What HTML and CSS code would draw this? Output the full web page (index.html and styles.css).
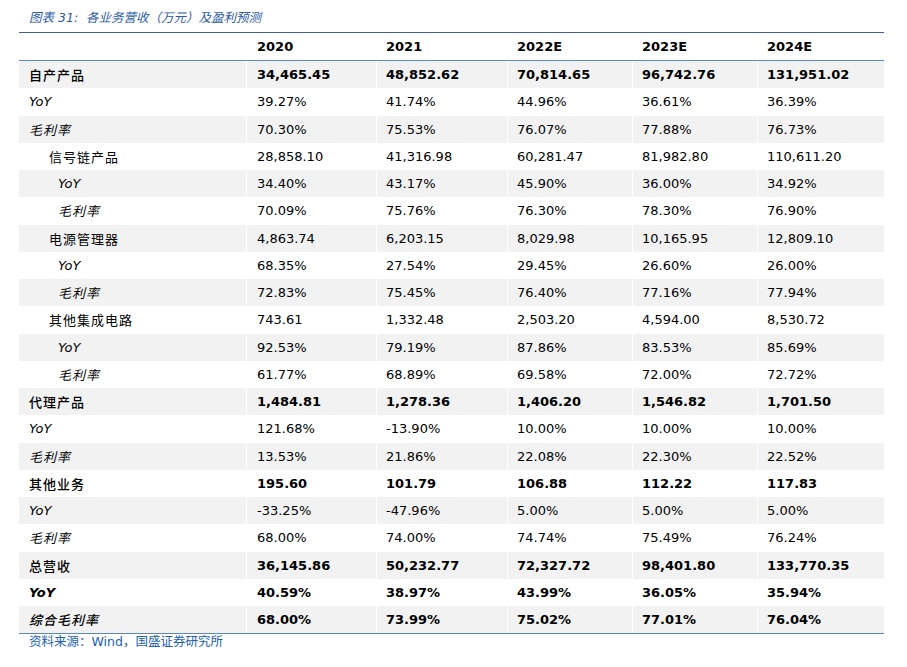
FILE: index.html
```html
<!DOCTYPE html>
<html lang="zh">
<head>
<meta charset="utf-8">
<title>各业务营收及盈利预测</title>
<link rel="stylesheet" href="styles.css">
</head>
<body>
<div class="page">
  <div class="title">图表 31:&nbsp; 各业务营收（万元）及盈利预测</div>
  <div class="table">
    <div class="row head">
      <div class="cell label"></div>
      <div class="cell">2020</div>
      <div class="cell">2021</div>
      <div class="cell">2022E</div>
      <div class="cell">2023E</div>
      <div class="cell">2024E</div>
    </div>
    <div class="row gray strong">
      <div class="cell label cjk">自产产品</div>
      <div class="cell">34,465.45</div><div class="cell">48,852.62</div><div class="cell">70,814.65</div><div class="cell">96,742.76</div><div class="cell">131,951.02</div>
    </div>
    <div class="row">
      <div class="cell label yoy">YoY</div>
      <div class="cell">39.27%</div><div class="cell">41.74%</div><div class="cell">44.96%</div><div class="cell">36.61%</div><div class="cell">36.39%</div>
    </div>
    <div class="row gray">
      <div class="cell label cjk it">毛利率</div>
      <div class="cell">70.30%</div><div class="cell">75.53%</div><div class="cell">76.07%</div><div class="cell">77.88%</div><div class="cell">76.73%</div>
    </div>
    <div class="row">
      <div class="cell label cjk l2">信号链产品</div>
      <div class="cell">28,858.10</div><div class="cell">41,316.98</div><div class="cell">60,281.47</div><div class="cell">81,982.80</div><div class="cell">110,611.20</div>
    </div>
    <div class="row gray">
      <div class="cell label yoy l3">YoY</div>
      <div class="cell">34.40%</div><div class="cell">43.17%</div><div class="cell">45.90%</div><div class="cell">36.00%</div><div class="cell">34.92%</div>
    </div>
    <div class="row">
      <div class="cell label cjk it l3">毛利率</div>
      <div class="cell">70.09%</div><div class="cell">75.76%</div><div class="cell">76.30%</div><div class="cell">78.30%</div><div class="cell">76.90%</div>
    </div>
    <div class="row gray">
      <div class="cell label cjk l2">电源管理器</div>
      <div class="cell">4,863.74</div><div class="cell">6,203.15</div><div class="cell">8,029.98</div><div class="cell">10,165.95</div><div class="cell">12,809.10</div>
    </div>
    <div class="row">
      <div class="cell label yoy l3">YoY</div>
      <div class="cell">68.35%</div><div class="cell">27.54%</div><div class="cell">29.45%</div><div class="cell">26.60%</div><div class="cell">26.00%</div>
    </div>
    <div class="row gray">
      <div class="cell label cjk it l3">毛利率</div>
      <div class="cell">72.83%</div><div class="cell">75.45%</div><div class="cell">76.40%</div><div class="cell">77.16%</div><div class="cell">77.94%</div>
    </div>
    <div class="row">
      <div class="cell label cjk l2">其他集成电路</div>
      <div class="cell">743.61</div><div class="cell">1,332.48</div><div class="cell">2,503.20</div><div class="cell">4,594.00</div><div class="cell">8,530.72</div>
    </div>
    <div class="row gray">
      <div class="cell label yoy l3">YoY</div>
      <div class="cell">92.53%</div><div class="cell">79.19%</div><div class="cell">87.86%</div><div class="cell">83.53%</div><div class="cell">85.69%</div>
    </div>
    <div class="row">
      <div class="cell label cjk it l3">毛利率</div>
      <div class="cell">61.77%</div><div class="cell">68.89%</div><div class="cell">69.58%</div><div class="cell">72.00%</div><div class="cell">72.72%</div>
    </div>
    <div class="row gray strong">
      <div class="cell label cjk">代理产品</div>
      <div class="cell">1,484.81</div><div class="cell">1,278.36</div><div class="cell">1,406.20</div><div class="cell">1,546.82</div><div class="cell">1,701.50</div>
    </div>
    <div class="row">
      <div class="cell label yoy">YoY</div>
      <div class="cell">121.68%</div><div class="cell">-13.90%</div><div class="cell">10.00%</div><div class="cell">10.00%</div><div class="cell">10.00%</div>
    </div>
    <div class="row gray">
      <div class="cell label cjk it">毛利率</div>
      <div class="cell">13.53%</div><div class="cell">21.86%</div><div class="cell">22.08%</div><div class="cell">22.30%</div><div class="cell">22.52%</div>
    </div>
    <div class="row strong">
      <div class="cell label cjk">其他业务</div>
      <div class="cell">195.60</div><div class="cell">101.79</div><div class="cell">106.88</div><div class="cell">112.22</div><div class="cell">117.83</div>
    </div>
    <div class="row gray">
      <div class="cell label yoy">YoY</div>
      <div class="cell">-33.25%</div><div class="cell">-47.96%</div><div class="cell">5.00%</div><div class="cell">5.00%</div><div class="cell">5.00%</div>
    </div>
    <div class="row">
      <div class="cell label cjk it">毛利率</div>
      <div class="cell">68.00%</div><div class="cell">74.00%</div><div class="cell">74.74%</div><div class="cell">75.49%</div><div class="cell">76.24%</div>
    </div>
    <div class="row gray strong">
      <div class="cell label cjk">总营收</div>
      <div class="cell">36,145.86</div><div class="cell">50,232.77</div><div class="cell">72,327.72</div><div class="cell">98,401.80</div><div class="cell">133,770.35</div>
    </div>
    <div class="row strong">
      <div class="cell label yoy">YoY</div>
      <div class="cell">40.59%</div><div class="cell">38.97%</div><div class="cell">43.99%</div><div class="cell">36.05%</div><div class="cell">35.94%</div>
    </div>
    <div class="row gray strong last">
      <div class="cell label cjk it">综合毛利率</div>
      <div class="cell">68.00%</div><div class="cell">73.99%</div><div class="cell">75.02%</div><div class="cell">77.01%</div><div class="cell">76.04%</div>
    </div>
  </div>
  <div class="source">资料来源：Wind，国盛证券研究所</div>
</div>
</body>
</html>
```

FILE: styles.css
```css
html, body {
  margin: 0;
  padding: 0;
  background: #ffffff;
}

.page {
  padding: 7px 0 0 19px;
  width: 865px;
  font-family: "DejaVu Sans", "Noto Sans CJK SC", sans-serif;
  color: #000000;
}

.title {
  height: 21px;
  line-height: 21px;
  padding-left: 10px;
  font-size: 12.5px;
  font-style: italic;
  color: #2b5aa6;
  font-family: "DejaVu Sans", "Noto Sans CJK SC", sans-serif;
  margin-bottom: 4px;
}

.table {
  border-top: 1px solid #3a62a0;
  border-bottom: 1px solid #5b86c4;
}

.row {
  display: grid;
  grid-template-columns: 227px 129px 130px 124px 124px 126px;
  column-gap: 1px;
  height: 27.25px;
  font-size: 13px;
}

.row.head {
  height: 27px;
  border-bottom: 1px solid #5b8acb;
  font-weight: bold;
}

.cell {
  display: flex;
  align-items: center;
  padding-left: 9px;
  white-space: nowrap;
}

.row .cell:nth-child(2) {
  padding-left: 10px;
}

.row .cell.label {
  padding-left: 10px;
}

.row.gray .cell {
  background: #f2f2f2;
}

.row.strong .cell {
  font-weight: bold;
}

.cjk {
  font-family: "Noto Sans CJK SC", sans-serif;
  letter-spacing: 1px;
  font-weight: normal;
}

.row.strong .cell.cjk {
  font-weight: 500;
}

.it {
  font-style: italic;
}

.yoy {
  font-style: italic;
}

.row .cell.l2 {
  padding-left: 30px;
}

.row .cell.l3 {
  padding-left: 39px;
}

.source {
  height: 16px;
  line-height: 16px;
  padding-left: 10px;
  font-size: 12.5px;
  color: #2160b4;
  font-family: "DejaVu Sans", "Noto Sans CJK SC", sans-serif;
}
```
